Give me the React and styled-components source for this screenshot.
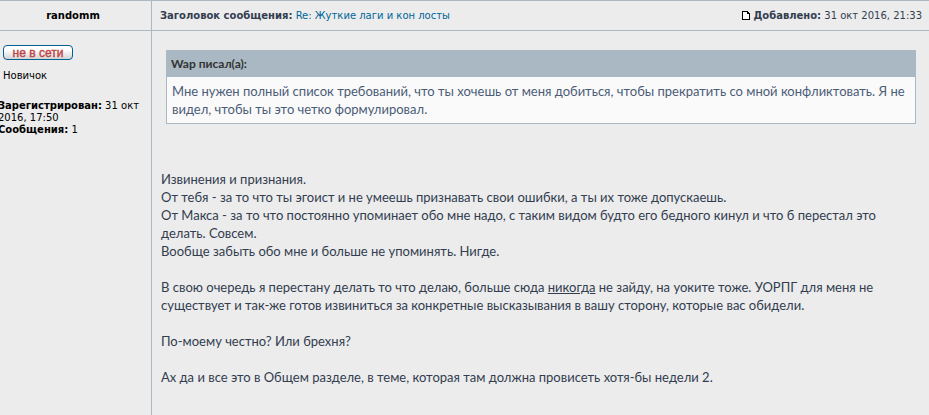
import styled, { createGlobalStyle } from "styled-components"

const GlobalStyle = createGlobalStyle`
body{
margin:0;
background-color:#ececec;
overflow-x:hidden;
}
`
const Post = styled.article`
  display: grid;
  grid-template-columns: 156px 1fr;
  grid-template-rows: 30px auto;
  min-height: 100vh;
  box-sizing: border-box;
  margin-left: -5px;
  border-top: 1px solid #a9b8c2;
  font-family: Verdana, "DejaVu Sans", sans-serif;
  font-size: 10px;
  line-height: 12px;
  color: #000000;
`
const Author = styled.header`
  display: flex;
  align-items: center;
  justify-content: center;
  border-bottom: 1px solid #a9b8c2;
  font-weight: bold;
`
const PostHead = styled.header`
  display: flex;
  align-items: center;
  justify-content: space-between;
  padding: 0 7px 0 8px;
  border-left: 1px solid #a9b8c2;
  border-bottom: 1px solid #a9b8c2;
  color: #323d4f;
`
const Subject = styled.a`
  color: #006699;
  text-decoration: none;
`
const Added = styled.div`
  display: flex;
  align-items: center;
  gap: 3px;
`
const Profile = styled.aside`
  padding: 14px 3px;
`
const Status = styled.div`
  width: 68px;
  height: 13px;
  margin-left: 5px;
  border: 1px solid #006090;
  border-radius: 4px;
  background: linear-gradient(#ffffff 30%, #d4d4d4);
  font-family: "Liberation Sans", Arial, sans-serif;
  font-size: 12px;
  line-height: 15px;
  text-align: center;
  color: #c04444;
  -webkit-text-stroke: 0.4px #c04444;
`
const Rank = styled.div`
  margin: 10px 5px 18px;
`
const Content = styled.div`
  padding: 19px 13px 24px 9px;
  border-left: 1px solid #a9b8c2;
  font-family: "Trebuchet MS", Lato, sans-serif;
  font-size: 13px;
  line-height: 18px;
  color: #323d4f;
`
const Quote = styled.blockquote`
  margin: 0 0 46px 5px;
  border: 1px solid #a9b8c2;
  background-color: #fafafa;
  color: #4b5c77;
`
const QuoteTitle = styled.div`
  padding: 4px;
  background-color: #a9b8c2;
  font-size: 12px;
  font-weight: bold;
  color: #333333;
`
const QuoteText = styled.div`
  padding: 5px;
`
const Message = styled.p`
  margin: 0 0 18px;
`

const PageIcon = () => (
  <svg width="8" height="9" viewBox="0 0 8 9" shapeRendering="crispEdges" aria-hidden="true">
    <path d="M0 0h6v1h1v1h1v7H0z" fill="#000000" />
    <path d="M1 1h4v2h2v5H1z" fill="#ffffff" />
  </svg>
)

const App = () => {
  return (
    <>
      <GlobalStyle />
      <Post>
        <Author>randomm</Author>
        <PostHead>
          <div>
            <b>Заголовок сообщения:</b> <Subject href="#post">Re: Жуткие лаги и кон лосты</Subject>
          </div>
          <Added>
            <PageIcon />
            <span><b>Добавлено:</b> 31 окт 2016, 21:33</span>
          </Added>
        </PostHead>
        <Profile>
          <Status>не в сети</Status>
          <Rank>Новичок</Rank>
          <div><b>Зарегистрирован:</b> 31 окт 2016, 17:50</div>
          <div><b>Сообщения:</b> 1</div>
        </Profile>
        <Content id="post">
          <Quote>
            <QuoteTitle>Wap писал(а):</QuoteTitle>
            <QuoteText>
              Мне нужен полный список требований, что ты хочешь от меня добиться, чтобы прекратить со мной конфликтовать. Я не видел, чтобы ты это четко формулировал.
            </QuoteText>
          </Quote>
          <Message>
            Извинения и признания.<br />
            От тебя - за то что ты эгоист и не умеешь признавать свои ошибки, а ты их тоже допускаешь.<br />
            От Макса - за то что постоянно упоминает обо мне надо, с таким видом будто его бедного кинул и что б перестал это делать. Совсем.<br />
            Вообще забыть обо мне и больше не упоминять. Нигде.
          </Message>
          <Message>
            В свою очередь я перестану делать то что делаю, больше сюда <u>никогда</u> не зайду, на уоките тоже. УОРПГ для меня не существует и так-же готов извиниться за конкретные высказывания в вашу сторону, которые вас обидели.
          </Message>
          <Message>По-моему честно? Или брехня?</Message>
          <Message>Ах да и все это в Общем разделе, в теме, которая там должна провисеть хотя-бы недели 2.</Message>
        </Content>
      </Post>
    </>
  )
}

export default App
